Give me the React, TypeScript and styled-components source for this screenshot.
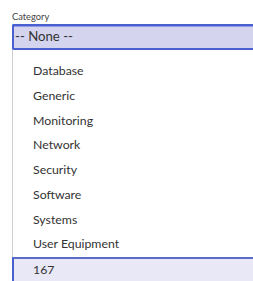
import styled, { createGlobalStyle } from "styled-components"

const categories = [
  "Database",
  "Generic",
  "Monitoring",
  "Network",
  "Security",
  "Software",
  "Systems",
  "User Equipment",
  "167",
]

const GlobalStyle = createGlobalStyle`
  html, body {
    margin: 0;
    padding: 0;
    background: #ffffff;
    overflow: hidden;
  }
  body {
    font-family: Lato, "Open Sans", sans-serif;
    color: #333333;
  }
`

const Field = styled.div`
  padding: 10px 0 0 12px;
`
const Label = styled.div`
  font-size: 9.3px;
  line-height: 13px;
  color: #444444;
`
const SelectBox = styled.div`
  height: 26px;
  margin-top: 1px;
  box-sizing: border-box;
  border: 2px solid #4a5fd0;
  border-right: none;
  border-radius: 2px 0 0 2px;
  background: #d4d4ee;
  font-size: 13.2px;
  line-height: 20px;
  padding-left: 1px;
  color: #333333;
  box-shadow: inset 0 1px 0 #8d9be3;
`
const List = styled.ul`
  list-style: none;
  margin: 0;
  padding: 9px 0 0;
  border-left: 1px solid #d0d0d0;
`
const Item = styled.li<{ $active?: boolean }>`
  height: 24.75px;
  box-sizing: border-box;
  font-size: 12.3px;
  line-height: 24px;
  padding-left: 20px;
  white-space: nowrap;
  ${(p) =>
    p.$active &&
    `
    background: #e8e8f6;
    border-top: 2px solid #5b6bc8;
    margin-left: -1px;
    border-left: 2px solid #4a5fd0;
    padding-left: 19px;
    line-height: 22px;
  `}
`

export default function App() {
  return (
    <>
      <GlobalStyle />
      <Field>
        <Label>Category</Label>
        <SelectBox>-- None --</SelectBox>
        <List>
          {categories.map((c) => (
            <Item key={c} $active={c === "167"}>
              {c}
            </Item>
          ))}
        </List>
      </Field>
    </>
  )
}
